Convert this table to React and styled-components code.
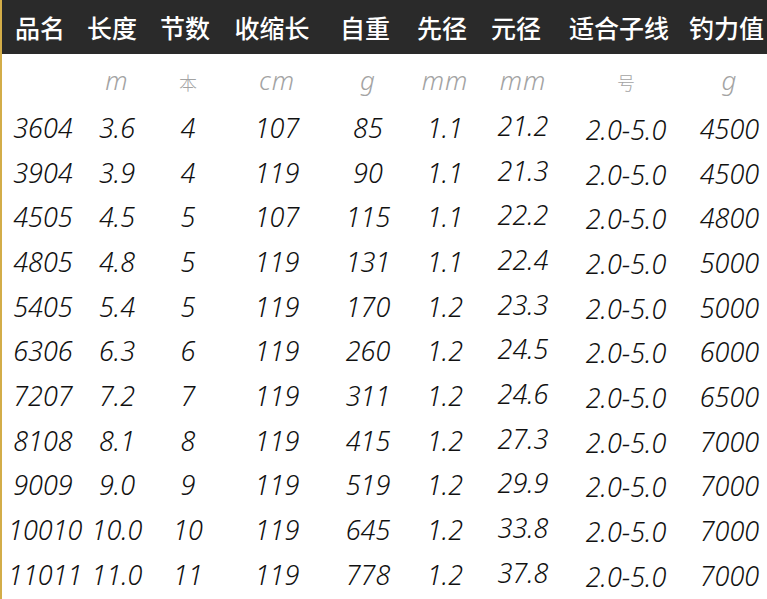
import React from "react";
import styled, { createGlobalStyle } from "styled-components";

const GlobalStyle = createGlobalStyle`
  html, body {
    margin: 0;
    padding: 0;
    background: #ffffff;
  }
  body {
    font-family: "Noto Sans", "Noto Sans CJK SC", sans-serif;
  }
`;

// column widths, and nudges for the data under each heading
const columns = [
  { w: 76, dx: 3, dy: 0 },
  { w: 68, dx: 5, dy: 0 },
  { w: 78, dx: 3, dy: 0 },
  { w: 96, dx: 5, dy: 0 },
  { w: 90, dx: 3, dy: 0 },
  { w: 64, dx: 3, dy: 0 },
  { w: 84, dx: 7, dy: -2 },
  { w: 122, dx: 7, dy: 2 },
  { w: 87, dx: 6, dy: 1 },
];

const template = columns.map((c) => `${c.w}px`).join(" ");

const headings = ["品名", "长度", "节数", "收缩长", "自重", "先径", "元径", "适合子线", "钓力值"];

const units = [
  { text: "", cjk: false },
  { text: "m", cjk: false },
  { text: "本", cjk: true },
  { text: "cm", cjk: false },
  { text: "g", cjk: false },
  { text: "mm", cjk: false },
  { text: "mm", cjk: false },
  { text: "号", cjk: true },
  { text: "g", cjk: false },
];

const rows = [
  ["3604", "3.6", "4", "107", "85", "1.1", "21.2", "2.0-5.0", "4500"],
  ["3904", "3.9", "4", "119", "90", "1.1", "21.3", "2.0-5.0", "4500"],
  ["4505", "4.5", "5", "107", "115", "1.1", "22.2", "2.0-5.0", "4800"],
  ["4805", "4.8", "5", "119", "131", "1.1", "22.4", "2.0-5.0", "5000"],
  ["5405", "5.4", "5", "119", "170", "1.2", "23.3", "2.0-5.0", "5000"],
  ["6306", "6.3", "6", "119", "260", "1.2", "24.5", "2.0-5.0", "6000"],
  ["7207", "7.2", "7", "119", "311", "1.2", "24.6", "2.0-5.0", "6500"],
  ["8108", "8.1", "8", "119", "415", "1.2", "27.3", "2.0-5.0", "7000"],
  ["9009", "9.0", "9", "119", "519", "1.2", "29.9", "2.0-5.0", "7000"],
  ["10010", "10.0", "10", "119", "645", "1.2", "33.8", "2.0-5.0", "7000"],
  ["11011", "11.0", "11", "119", "778", "1.2", "37.8", "2.0-5.0", "7000"],
];

const Sheet = styled.div`
  width: 767px;
  height: 599px;
  overflow: hidden;
  box-sizing: border-box;
  border-left: 2px solid #d3ad48;
  background: #ffffff;
`;

const HeaderBar = styled.div`
  display: grid;
  grid-template-columns: ${template};
  height: 54px;
  align-items: center;
  background: #2a2a2a;
`;

const HeadCell = styled.div`
  text-align: center;
  color: #ffffff;
  font-family: "Noto Sans CJK SC", "Noto Sans", sans-serif;
  font-weight: 500;
  font-size: 25px;
  line-height: 1;
  white-space: nowrap;
  padding-left: ${(p) => p.$dx * 2}px;
`;

const UnitRow = styled.div`
  display: grid;
  grid-template-columns: ${template};
  height: 51px;
  align-items: center;
`;

const UnitCell = styled.div`
  text-align: center;
  color: #a3a3a3;
  font-family: ${(p) =>
    p.$cjk ? `"Noto Sans CJK SC", sans-serif` : `"Noto Sans", sans-serif`};
  font-style: ${(p) => (p.$cjk ? "normal" : "italic")};
  font-weight: 300;
  font-size: ${(p) => (p.$cjk ? "18px" : "26px")};
  letter-spacing: ${(p) => (p.$cjk ? "0" : "1px")};
  line-height: 1;
  padding-left: ${(p) => p.$dx * 2}px;
  margin-top: ${(p) => (p.$cjk ? "4px" : "0")};
`;

const DataGrid = styled.div`
  display: grid;
  grid-template-columns: ${template};
  grid-auto-rows: 44.7px;
  align-items: center;
`;

const DataCell = styled.div`
  text-align: center;
  color: #111111;
  font-family: "Noto Sans", "DejaVu Sans", sans-serif;
  font-style: italic;
  font-weight: 350;
  font-size: 27px;
  line-height: 1;
  white-space: nowrap;
  padding-left: ${(p) => p.$dx * 2}px;
  margin-top: ${(p) => p.$dy * 2}px;
`;

export default function App() {
  return (
    <>
      <GlobalStyle />
      <Sheet>
        <HeaderBar>
          {headings.map((h, i) => (
            <HeadCell key={h} $dx={i === 8 ? 3 : 0}>
              {h}
            </HeadCell>
          ))}
        </HeaderBar>
        <UnitRow>
          {units.map((u, i) => (
            <UnitCell key={i} $cjk={u.cjk} $dx={columns[i].dx}>
              {u.text}
            </UnitCell>
          ))}
        </UnitRow>
        <DataGrid>
          {rows.map((row, r) =>
            row.map((v, i) => (
              <DataCell key={`${r}-${i}`} $dx={columns[i].dx} $dy={columns[i].dy}>
                {v}
              </DataCell>
            ))
          )}
        </DataGrid>
      </Sheet>
    </>
  );
}
